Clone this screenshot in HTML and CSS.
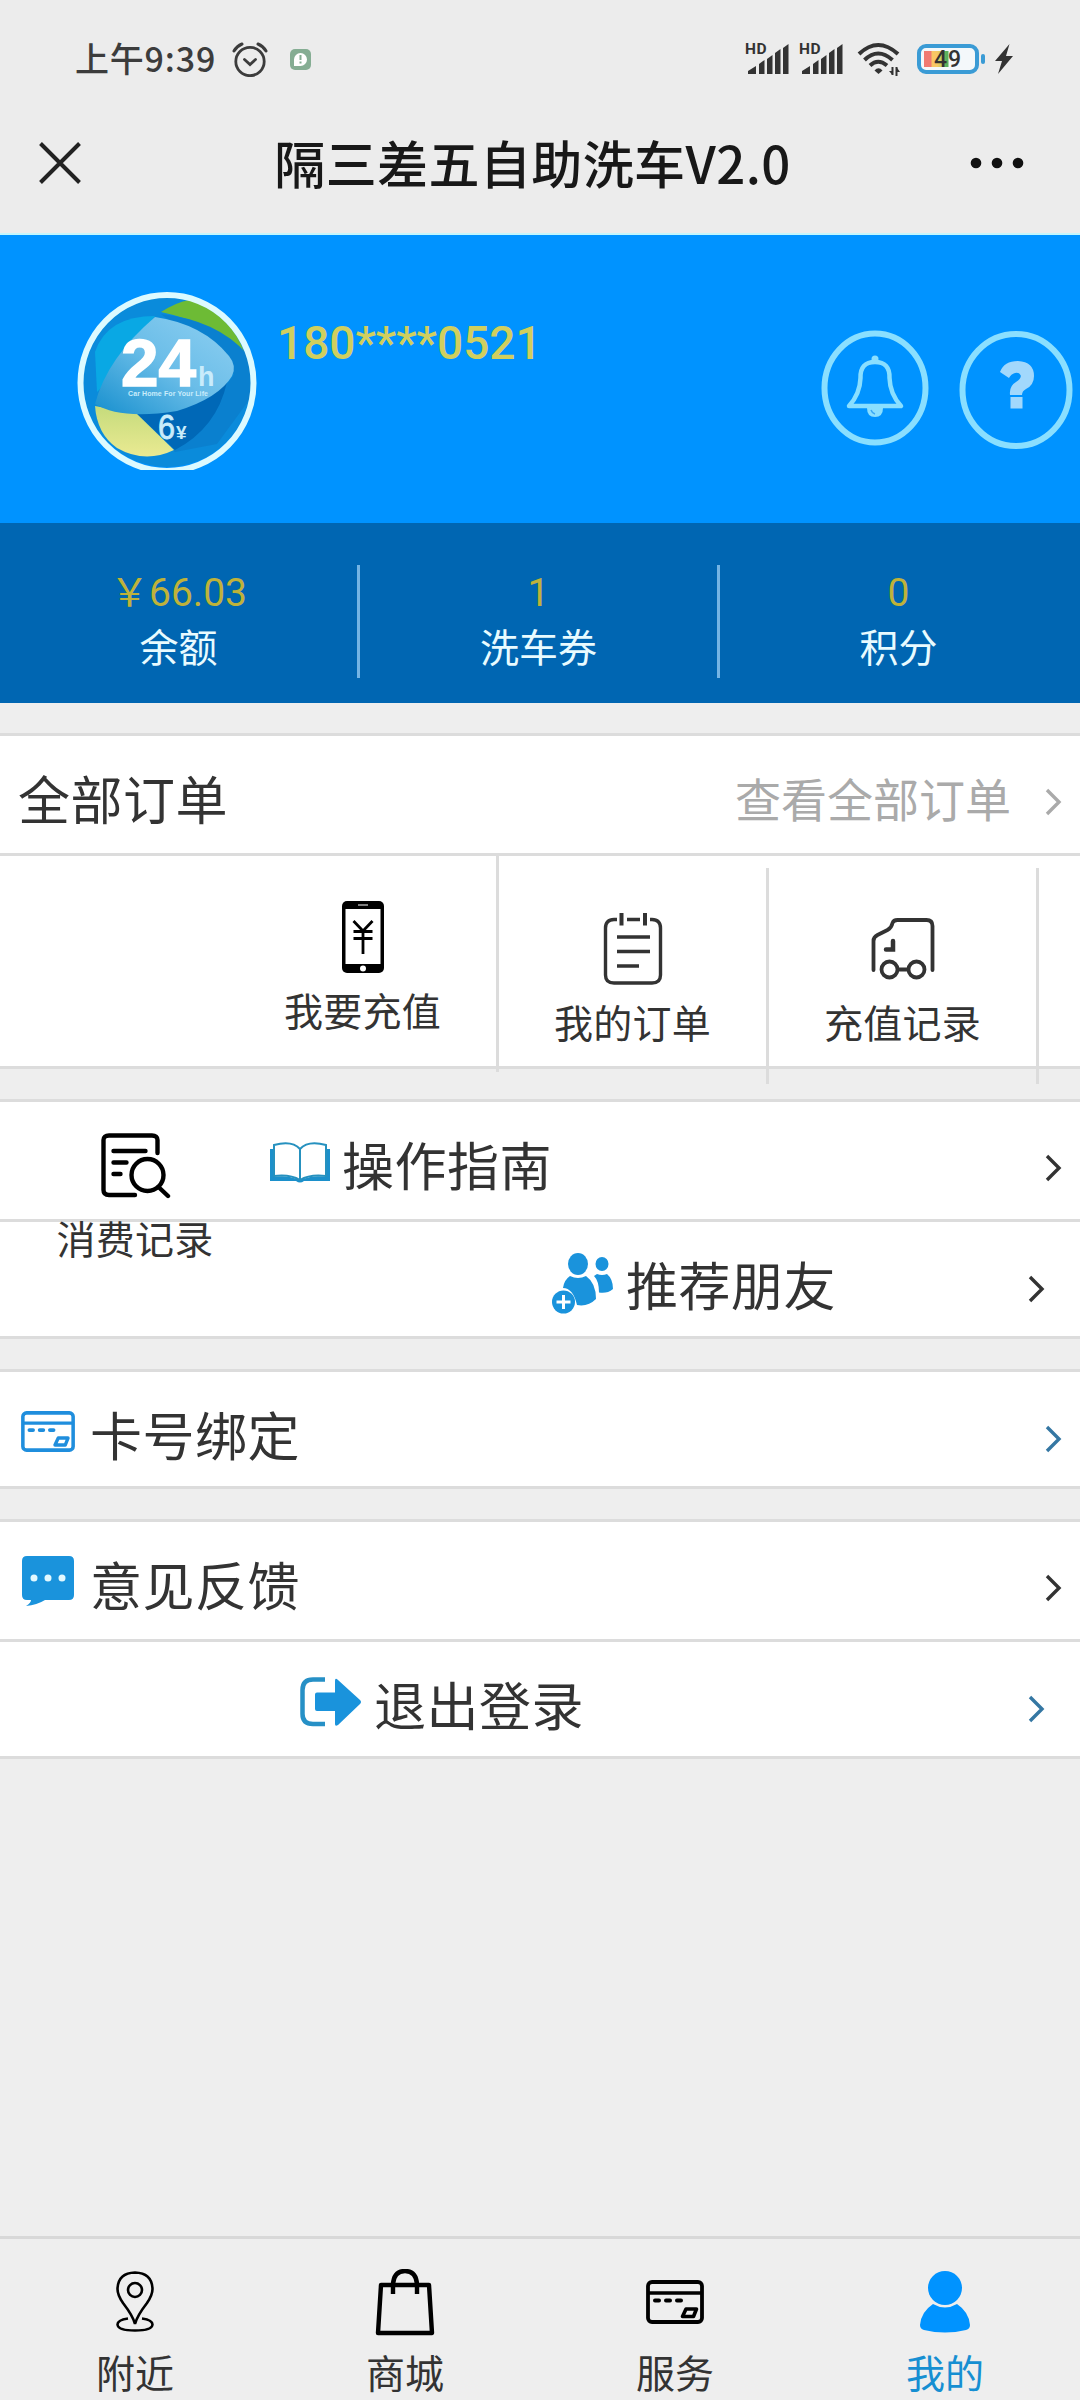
FILE: index.html
```html
<!DOCTYPE html>
<html lang="zh-CN">
<head>
<meta charset="utf-8">
<title>隔三差五自助洗车V2.0</title>
<link rel="stylesheet" href="styles.css">
</head>
<body>
<svg class="defs" width="0" height="0">
  <symbol id="chevron" viewBox="0 0 17 28"><path d="M2 2l12 12L2 26" fill="none" stroke="currentColor" stroke-width="3.400"/></symbol>
  <symbol id="signal" viewBox="0 0 42 32">
    <path d="M1 31v-3l8-5v8zM12 31V21l5.500-4v14zM20 31V16l5.500-4v19zM28 31V10l5.500-4v25zM36 31V5l5.500-4v30z" fill="#333"/>
  </symbol>
  <symbol id="card" viewBox="0 0 58 44">
    <rect x="2" y="2" width="54" height="40" rx="4" fill="none" stroke="currentColor" stroke-width="3.800"/>
    <path d="M2 13h54" stroke="currentColor" stroke-width="3.600"/>
    <path d="M9 20.500h4M20 20.500h4M31 20.500h4" stroke="currentColor" stroke-width="4" stroke-linecap="round"/>
    <path d="M40 29h10.500l-3 7.500H36.500z" fill="none" stroke="currentColor" stroke-width="3.600" stroke-linejoin="round"/>
  </symbol>
</svg>
<div class="screen">
  <div class="status">
    <span class="time">上午9:39</span>
    <svg class="alarm" width="36" height="36" viewBox="0 0 36 36" fill="none" stroke="#3c3c3c" stroke-width="2.800" stroke-linecap="round">
      <circle cx="18" cy="20.500" r="14.200"/><path d="M12.500 18.500l5.500 5 5.500-5"/><path d="M2 10Q5 5 10 3M34 10Q31 5 26 3" stroke-width="3"/>
    </svg>
    <svg class="bubble" width="21" height="21" viewBox="0 0 21 21">
      <rect width="21" height="21" rx="5" fill="#85ad93"/><path d="M4 17V10.500a6.500 6.500 0 1 1 6.500 6.500z" fill="#fff"/><path d="M10.500 6v5M10.500 12.500v2" stroke="#85ad93" stroke-width="2"/>
    </svg>
    <span class="grow"></span>
    <span class="sim"><span class="hd">HD</span><svg width="42" height="32"><use href="#signal"/></svg></span>
    <span class="sim"><span class="hd">HD</span><svg width="42" height="32"><use href="#signal"/></svg></span>
    <svg class="wifi" width="44" height="34" viewBox="0 0 44 34" fill="none" stroke="#333" stroke-width="4">
      <path d="M2 12Q21-6 41 12M7.500 18Q21 5 35.500 18M13 23.500Q21 16 30 23.500"/>
      <path d="M17.500 28.500Q21.500 24 25.500 28.500L21.500 32z" fill="#333" stroke="none"/>
      <path d="M35.500 25v8M39.500 34v-9" stroke-width="2"/><path d="M32 29h3.500v4zM43 30h-3.500v-5z" fill="#333" stroke="none"/>
    </svg>
    <span class="battery"><span class="level">49</span></span>
    <svg class="bolt" width="20" height="30" viewBox="0 0 20 30"><path d="M15.500 0L1 17h7L4 30 19 12h-7z" fill="#333"/></svg>
  </div>
  <div class="titlebar">
    <svg class="close" width="42" height="42" viewBox="0 0 42 42"><path d="M1.500 1.500l39 39M40.500 1.500l-39 39" stroke="#222" stroke-width="4"/></svg>
    <h1>隔三差五自助洗车V2.0</h1>
    <svg class="more" width="54" height="12" viewBox="0 0 54 12" fill="#111"><circle cx="6" cy="6" r="5.300"/><circle cx="27" cy="6" r="5.300"/><circle cx="48" cy="6" r="5.300"/></svg>
  </div>

  <div class="profile">
    <svg class="avatar" width="180" height="178" viewBox="0 0 180 178">
      <defs>
        <clipPath id="disc"><ellipse cx="90" cy="90" rx="84" ry="85"/></clipPath>
        <linearGradient id="leaf" x1="1" y1="0" x2="0" y2="1"><stop offset="0" stop-color="#8fd0f2"/><stop offset=".5" stop-color="#6abde8"/><stop offset="1" stop-color="#168fce"/></linearGradient>
        <linearGradient id="sand" x1="0" y1="0" x2="0" y2="1"><stop offset="0" stop-color="#c5db7c"/><stop offset="1" stop-color="#eaea92"/></linearGradient>
      </defs>
      <g clip-path="url(#disc)">
        <rect width="180" height="178" fill="#0a8bdb"/>
        <path d="M84 20Q100 10 112 8Q154 22 168 62Q140 32 84 20z" fill="#6dbb35"/>
        <path d="M84 22Q140 28 170 62L178 100L140 152L98 160L60 124L120 110Q150 96 157 82z" fill="#0a80cf"/>
        <path d="M18 60Q30 24 78 24L60 50L30 90L20 100z" fill="#09a8e4"/>
        <path d="M60 122Q108 120 150 90Q140 136 98 158z" fill="#0068b7"/>
        <path d="M18 114L60 122L97 158Q68 172 40 156Q20 142 18 114z" fill="url(#sand)"/>
        <path d="M78 25Q126 32 152 64Q160 74 155 84Q142 106 100 119Q44 128 18 112Q30 66 78 25z" fill="url(#leaf)"/>
      </g>
      <ellipse cx="90" cy="91" rx="86.500" ry="88" fill="none" stroke="#dcfaff" stroke-width="6"/>
      <g fill="#fff" font-family="Liberation Sans, Arial, sans-serif">
        <text x="44" y="94" font-size="66" font-weight="700" textLength="75" lengthAdjust="spacingAndGlyphs" stroke="#fff" stroke-width="1.500">24</text>
        <text x="121" y="94" font-size="27" font-weight="700" fill="#c9ecfb">h</text>
        <text x="51" y="104" font-size="7" font-weight="700" fill="#c9ecfb" textLength="80">Car Home For Your Life</text>
        <text x="81" y="147" font-size="35" fill="#c9ecfb" stroke="#c9ecfb" stroke-width=".8" textLength="17" lengthAdjust="spacingAndGlyphs">6</text>
        <text x="99" y="147" font-size="19" font-weight="700" fill="#c9ecfb">¥</text>
      </g>
    </svg>
    <span class="phone">180****0521</span>
    <span class="grow"></span>
    <svg class="bell" width="108" height="116" viewBox="0 0 108 116" fill="none" stroke="#8adfff" stroke-width="6">
      <ellipse cx="54" cy="58" rx="50.500" ry="54.500"/>
      <path d="M28 76Q39 64 39.500 48Q39 32 54 32Q69 32 68.500 48Q69 64 80 76z" stroke-width="4.500" stroke-linejoin="round"/>
      <circle cx="54" cy="29" r="3.500" fill="#8adfff" stroke="none"/>
      <path d="M46 78h16Q62 87 54 87Q46 87 46 78z" fill="#8adfff" stroke="none"/><path d="M50 80q1 3 4 4" stroke="#3aa8f6" stroke-width="1.500"/>
    </svg>
    <svg class="help" width="114" height="120" viewBox="0 0 114 120">
      <ellipse cx="57" cy="60" rx="53.500" ry="56" fill="none" stroke="#8adfff" stroke-width="6"/>
      <path d="M41 42Q45 31 59 31Q75 32 75 46Q75 55 67 59Q63 61 63 65H51Q50 56 57 52Q63 48 61.500 45Q60 42 56 43Q52 44 50 48z" fill="#a2d8fc"/>
      <path d="M51.500 67h12v11.500h-12z" fill="#a2d8fc"/>
    </svg>
  </div>
  <div class="stats">
    <div class="stat"><b>￥66.03</b><span>余额</span></div>
    <div class="stat"><b>1</b><span>洗车券</span></div>
    <div class="stat"><b>0</b><span>积分</span></div>
  </div>

  <div class="group orders">
    <div class="row"><span class="label">全部订单</span><span class="grow"></span><span class="hint">查看全部订单</span><svg class="chev gray"><use href="#chevron"/></svg></div>
    <div class="grid">
      <div class="cell first">
        <svg width="42" height="72" viewBox="0 0 42 72"><rect width="42" height="72" rx="5" fill="#000"/><path d="M3.500 8h35v55h-35z" fill="#fff"/><path d="M16 4h10" stroke="#aaa" stroke-width="1.500"/><circle cx="21" cy="67.500" r="3" fill="#fff"/><path d="M11.500 20L21 30l9.500-10M21 30v23M11.500 30.500h19M11.500 37.500h19" fill="none" stroke="#000" stroke-width="2.800"/></svg>
        <span>我要充值</span>
      </div>
      <div class="cell">
        <svg width="60" height="72" viewBox="0 0 60 72" fill="none" stroke="#333" stroke-width="3.400"><path d="M14 6.500h-3Q2.500 6.500 2.500 15v47Q2.500 70 11 70h38q8.500 0 8.500-8V15q0-8.500-8.500-8.500h-2M24 6.500h13"/><path d="M18.500 0v12.500M42 0v12.500" stroke-width="4"/><path d="M14 24h33M14 38.500h33M14 53h22"/></svg>
        <span>我的订单</span>
      </div>
      <div class="cell">
        <svg width="64" height="72" viewBox="0 0 64 72" fill="none" stroke="#333" stroke-width="3.800" stroke-linecap="round"><path d="M2.500 57V28q0-4 4-6l10-5q4-2 5-7 1-3 5-3h29q6 0 6 6v44"/><path d="M22 28v8.500h-7" stroke-width="4.500"/><circle cx="18.500" cy="56.500" r="8"/><circle cx="45.500" cy="56.500" r="8"/><path d="M27 56.500h10"/></svg>
        <span>充值记录</span>
      </div>
      <div class="wrapped">
        <svg width="70" height="66" viewBox="0 0 70 66" fill="none" stroke="#000" stroke-width="4.400" stroke-linecap="round"><path d="M56.500 20V7Q56.500 2.500 51 2.500H8Q2.500 2.500 2.500 7v50Q2.500 62 8 62h26M12.500 18h32M12.500 29.500h13M12.500 41h7"/><ellipse cx="46.500" cy="42" rx="16" ry="16"/><path d="M57.500 54l9.500 9"/></svg>
        <span>消费记录</span>
      </div>
    </div>
  </div>

  <div class="group">
    <div class="row guide">
      <svg class="ico" width="60" height="42" viewBox="0 0 60 42"><path d="M0 7h3v28q14-2 24 2h6q10-4 24-2V7h3v32H34q-4 3-8 0H0z" fill="#1c90cb"/><path d="M4 34V3Q22-2 30 7Q38-2 56 3v31Q40 32 30 38Q20 32 4 34zM30 7v30" fill="#fff" stroke="#2691bf" stroke-width="2"/></svg>
      <span class="label">操作指南</span><span class="grow"></span><svg class="chev"><use href="#chevron"/></svg>
    </div>
    <div class="row last friends">
      <svg class="ico" width="62" height="64" viewBox="0 0 62 64" fill="#1a93dc"><ellipse cx="26" cy="14" rx="10" ry="11"/><path d="M18 26q8 4 16 0 10 7 10 23-8 8-19 6Q21 38 11 38 12 30 18 26z"/><ellipse cx="50" cy="14" rx="6.500" ry="7"/><path d="M45 24q5 2 10 0 6 5 6 15-6 5-14 3.500Q47 31 42 26z"/><circle cx="11.500" cy="52" r="11.500"/><path d="M11.500 45v14M4.500 52h14" stroke="#fff" stroke-width="3"/></svg>
      <span class="label">推荐朋友</span><span class="grow"></span><svg class="chev"><use href="#chevron"/></svg>
    </div>
  </div>

  <div class="group">
    <div class="row last">
      <svg class="ico lead cardico" width="54" height="41" viewBox="0 0 58 44" preserveAspectRatio="none"><use href="#card"/></svg>
      <span class="label">卡号绑定</span><span class="grow"></span><svg class="chev link"><use href="#chevron"/></svg>
    </div>
  </div>

  <div class="group">
    <div class="row">
      <svg class="ico lead" width="54" height="52" viewBox="0 0 54 52"><path d="M6 1h42q5 0 5 5v34q0 5-5 5H24q-8 5-19 6 5-3 5-6H6q-5 0-5-5V6q0-5 5-5z" fill="#1a93dc"/><g fill="#e2f8ff"><circle cx="13" cy="23" r="3.500"/><circle cx="27" cy="23" r="3.500"/><circle cx="41" cy="23" r="3.500"/></g></svg>
      <span class="label">意见反馈</span><span class="grow"></span><svg class="chev"><use href="#chevron"/></svg>
    </div>
    <div class="row last logout">
      <svg class="ico" width="62" height="50" viewBox="0 0 62 50"><path d="M25 2.500H13Q2.500 2.500 2.500 13v24Q2.500 47 13 47h12" fill="none" stroke="#2690c6" stroke-width="4.500"/><path d="M17 15.500h18V4q0-4 3-1l22 20q2 2 0 4L38 48q-3 2-3-1V34H17q-2 0-2-2V17.500q0-2 2-2z" fill="#1a93dc"/></svg>
      <span class="label">退出登录</span><span class="grow"></span><svg class="chev link"><use href="#chevron"/></svg>
    </div>
  </div>

  <div class="tabs">
    <div class="tab"><svg width="38" height="70" viewBox="0 0 38 70" fill="none" stroke="#000" stroke-width="2.600"><path d="M19 55Q17 47 7 34Q1.500 26 1.500 20Q2 4 19 3.500Q36 4 36.500 20Q36.500 26 31 34Q21 47 19 55z"/><circle cx="19" cy="21" r="7"/><path d="M12 49.500Q1.500 51 1.500 55.500Q2 61.500 19 61.500Q36 61.500 36.500 55.500Q36.500 51 26 49.500"/></svg><span>附近</span></div>
    <div class="tab"><svg width="60" height="70" viewBox="0 0 60 70" fill="none" stroke="#000" stroke-width="4.400"><path d="M6 16h48l3 48H3z" stroke-linejoin="round"/><path d="M18 25V15Q19 2 30 2Q41 2 42 15v10"/></svg><span>商城</span></div>
    <div class="tab"><svg width="58" height="70" viewBox="0 0 58 70"><use href="#card" width="58" height="44" y="11"/></svg><span>服务</span></div>
    <div class="tab active"><svg width="52" height="70" viewBox="0 0 52 70" fill="#0093ff"><circle cx="26" cy="19" r="17"/><path d="M14 35q12 7 24 0 12 8 13 21 0 4-4 5-21 5-42 0-4-1-4-5 1-13 13-21z"/></svg><span>我的</span></div>
  </div>
</div>
</body>
</html>
```
FILE: styles.css
```css
* { box-sizing: border-box; }
body { margin: 0; background: #eee; color: #333; font-family: Roboto, "Noto Sans CJK SC", sans-serif; }
svg { display: block; flex: none; }
.defs { position: absolute; }
.grow { flex: 1; }
.screen { width: 1080px; height: 2400px; display: flex; flex-direction: column; background: #eee; overflow: hidden; }

.status { height: 116px; padding: 2px 66px 0 75px; display: flex; align-items: center; background: #ececec; flex: none; }
.time { width: 157px; font: 500 34px/40px "Noto Sans CJK SC", sans-serif; color: #3c3c3c; white-space: nowrap; letter-spacing: .8px; margin-top: -3px; }
.bubble { margin-left: 22px; }
.sim { width: 54px; height: 32px; position: relative; padding-left: 1px; }
.hd { position: absolute; left: -1px; top: -3px; font: 700 15.500px/18px Roboto, sans-serif; letter-spacing: .6px; color: #333; }
.wifi { margin-left: 3px; }
.battery { position: relative; width: 62px; height: 30px; margin-left: 16px; border: 4px solid #3a9bd5; border-radius: 9px; padding: 3px; background: #f4f8fa; }
.battery::after { content: ""; position: absolute; right: -10px; top: 6px; width: 4px; height: 10px; border-radius: 2px; background: #3a9bd5; }
.level { display: block; height: 16px; background: linear-gradient(90deg, #f07a72 0 7px, #f8c765 8px 13px, #c8cf60 17px, #5ab05c 22px 24px, transparent 25px); font: 500 23px/17px Roboto, sans-serif; color: #333; padding-left: 10px; letter-spacing: 1px; }
.bolt { margin-left: 15px; }

.titlebar { height: 119px; padding: 0 56px 24px 39px; display: flex; align-items: center; justify-content: space-between; background: #ececec; border-bottom: 2px solid #c4f6fc; flex: none; }
.titlebar h1 { margin: -1px 0 0 14px; font: 500 51px/70px "Noto Sans CJK SC", sans-serif; letter-spacing: .4px; color: #181818; }

.profile { height: 288px; padding: 57px 7px 0 77px; display: flex; align-items: flex-start; background: #0093ff; flex: none; }
.phone { margin: 21px 0 0 20px; font: 500 46px/60px Roboto, sans-serif; color: #d0cf5e; }
.bell { margin: 38px 30px 0 0; }
.help { margin-top: 38px; }

.stats { height: 180px; display: flex; background: #0066b2; padding-top: 42px; flex: none; }
.stat { flex: none; width: 360px; height: 113px; padding-top: 1px; display: flex; flex-direction: column; align-items: center; border-right: 3px solid #74b4e4; color: #e8fbff; font-size: 39px; }
.stat:last-child { border-color: transparent; }
.stat b { font-weight: 400; font-size: 39px; line-height: 54px; color: #bfb23a; }
.stat span { line-height: 59px; }

.group { margin-top: 30px; border-top: 3px solid #dcdcdc; background: #fff; flex: none; }
.row { height: 120px; padding: 0 18px; border-bottom: 3px solid #dcdcdc; display: flex; align-items: center; }
.row.last { height: 117px; }
.label { font-size: 52px; line-height: 76px; letter-spacing: .5px; margin-top: 16px; }
.row.last .label { margin-top: 19px; }
.hint { font-size: 46px; color: #aaa; margin: 4px 34px 0 0; }
.chev { width: 17px; height: 28px; margin-top: 15px; color: #333; }
.row.last .chev { margin-top: 19px; }
.gray { color: #aaa; }
.link { color: #3577a3; }
.ico { margin-right: 12px; margin-top: 4px; }
.row.last .ico { margin-top: 5px; }
.ico.lead { margin-left: 3px; margin-right: 15px; }
.row .ico.lead { margin-top: 1px; }
.row.last .cardico { color: #1f8edd; margin-top: 5px; }
.guide { padding-left: 270px; }
.friends { padding: 0 35px 0 552px; }
.logout { padding: 0 35px 0 300px; }

.grid { height: 213px; padding-left: 229px; display: flex; position: relative; border-bottom: 3px solid #dcdcdc; }
.cell { width: 270px; height: 216px; margin-top: 12px; padding-top: 45px; flex: none; border-right: 3px solid #dcdcdc; display: flex; flex-direction: column; align-items: center; font-size: 39px; letter-spacing: .3px; }
.cell.first { margin-top: 0; }
.cell span { line-height: 56px; margin-top: 12px; }
.wrapped { position: absolute; left: 0; top: 277px; width: 270px; display: flex; flex-direction: column; align-items: center; font-size: 39px; letter-spacing: .3px; }
.wrapped svg { margin-left: 1px; }
.wrapped span { line-height: 56px; margin-top: 14px; }

.tabs { height: 164px; margin-top: auto; padding-top: 30px; display: flex; border-top: 3px solid #d8d8d8; flex: none; }
.tab { flex: 1; display: flex; flex-direction: column; align-items: center; font-size: 39px; color: #333; }
.tab svg { color: #000; }
.tab span { line-height: 56px; margin-top: 8px; }
.tab.active { color: #168fd2; }
```
